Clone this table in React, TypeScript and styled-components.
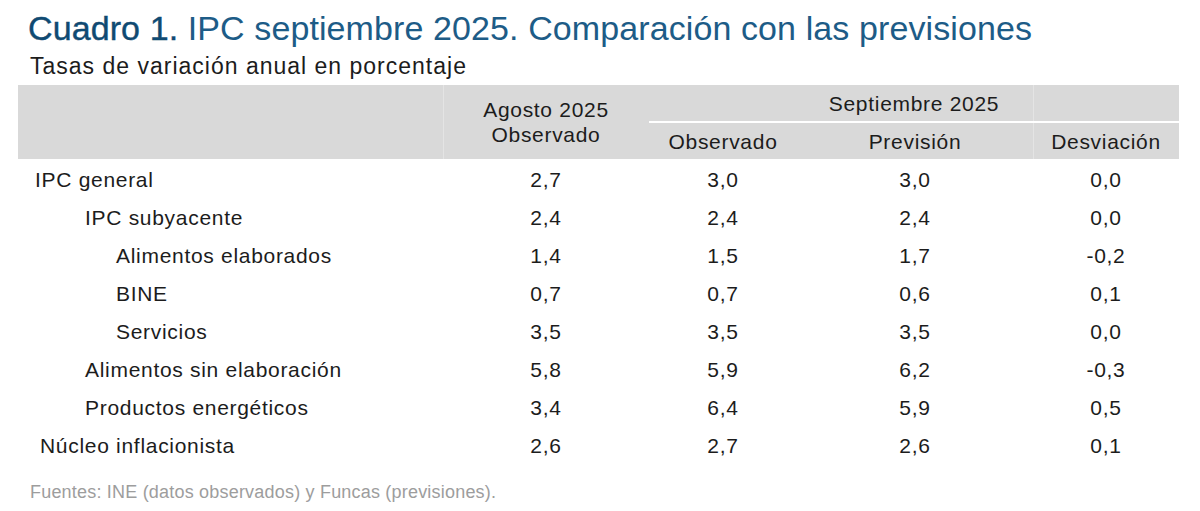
import React from "react";
import styled, { createGlobalStyle } from "styled-components";

const GlobalStyle = createGlobalStyle`
  body {
    margin: 0;
    background: #ffffff;
    font-family: "Liberation Sans", Arial, sans-serif;
    color: #1c1c1c;
  }
`;

const Page = styled.div`
  width: 1200px;
  height: 511px;
  padding-top: 8px;
  box-sizing: border-box;
`;

const Title = styled.h1`
  margin: 0 0 0 28px;
  font-size: 34px;
  font-weight: 400;
  line-height: 40px;
  letter-spacing: 0.1px;
  color: #1d5c87;
`;

const TitleLead = styled.span`
  color: #0f4a72;
  -webkit-text-stroke: 0.4px #0f4a72;
`;

const Subtitle = styled.h2`
  margin: 4px 0 0 30px;
  font-size: 23px;
  font-weight: 400;
  line-height: 28px;
  letter-spacing: 1px;
  color: #1c1c1c;
`;

const Table = styled.div`
  margin: 5px 0 0 18px;
  width: 1161px;
`;

const columns = "425px 206px 148px 236px 146px";

const Head = styled.div`
  display: grid;
  grid-template-columns: ${columns};
  grid-template-rows: 36px 2px 36px;
  background: #d9d9d9;
  font-size: 21px;
  letter-spacing: 0.7px;
`;

const HeadCell = styled.div<{ $col: string; $row: string }>`
  grid-column: ${(p) => p.$col};
  grid-row: ${(p) => p.$row};
  display: flex;
  align-items: center;
  justify-content: center;
  text-align: center;
  line-height: 25px;
`;

const HeadDivider = styled.div<{ $col: number }>`
  grid-column: ${(p) => p.$col};
  grid-row: 1 / 4;
  border-left: 1px solid #e4e4e4;
`;

const HeadRule = styled.div`
  grid-column: 3 / 6;
  grid-row: 2;
  background: #ffffff;
`;

const Body = styled.div`
  padding-top: 2px;
`;

const Row = styled.div`
  display: grid;
  grid-template-columns: ${columns};
  height: 38px;
  align-items: center;
  font-size: 21px;
  letter-spacing: 0.7px;
`;

const Label = styled.div<{ $indent: number }>`
  padding-left: ${(p) => p.$indent}px;
`;

const Value = styled.div`
  text-align: center;
`;

const Source = styled.p`
  margin: 17px 0 0 30px;
  font-size: 18px;
  letter-spacing: 0.2px;
  color: #9d9d9d;
`;

type RowData = {
  label: string;
  indent: number;
  values: string[];
};

const rows: RowData[] = [
  { label: "IPC general", indent: 17, values: ["2,7", "3,0", "3,0", "0,0"] },
  { label: "IPC subyacente", indent: 67, values: ["2,4", "2,4", "2,4", "0,0"] },
  { label: "Alimentos elaborados", indent: 98, values: ["1,4", "1,5", "1,7", "-0,2"] },
  { label: "BINE", indent: 98, values: ["0,7", "0,7", "0,6", "0,1"] },
  { label: "Servicios", indent: 98, values: ["3,5", "3,5", "3,5", "0,0"] },
  { label: "Alimentos sin elaboración", indent: 67, values: ["5,8", "5,9", "6,2", "-0,3"] },
  { label: "Productos energéticos", indent: 67, values: ["3,4", "6,4", "5,9", "0,5"] },
  { label: "Núcleo inflacionista", indent: 22, values: ["2,6", "2,7", "2,6", "0,1"] },
];

export default function App() {
  return (
    <Page>
      <GlobalStyle />
      <Title>
        <TitleLead>Cuadro 1.</TitleLead> IPC septiembre 2025. Comparación con las previsiones
      </Title>
      <Subtitle>Tasas de variación anual en porcentaje</Subtitle>
      <Table>
        <Head>
          <HeadDivider $col={2} />
          <HeadDivider $col={5} />
          <HeadCell $col="2" $row="1 / 4">
            Agosto 2025
            <br />
            Observado
          </HeadCell>
          <HeadCell $col="3 / 6" $row="1">Septiembre 2025</HeadCell>
          <HeadRule />
          <HeadCell $col="3" $row="3">Observado</HeadCell>
          <HeadCell $col="4" $row="3">Previsión</HeadCell>
          <HeadCell $col="5" $row="3">Desviación</HeadCell>
        </Head>
        <Body>
          {rows.map((r) => (
            <Row key={r.label}>
              <Label $indent={r.indent}>{r.label}</Label>
              {r.values.map((v, i) => (
                <Value key={i}>{v}</Value>
              ))}
            </Row>
          ))}
        </Body>
      </Table>
      <Source>Fuentes: INE (datos observados) y Funcas (previsiones).</Source>
    </Page>
  );
}
